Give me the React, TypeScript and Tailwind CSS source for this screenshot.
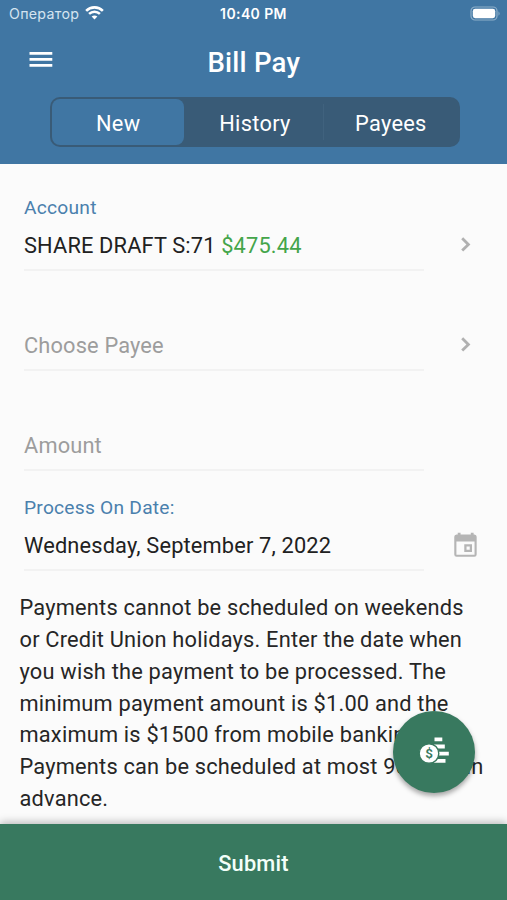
import type { ReactNode } from 'react';

const Chevron = () => (
  <svg viewBox="0 0 32 32" className="h-8 w-8 fill-[#b1b1b1]">
    <path d="M11.2 10.2l2-2 7.2 7.2-7.2 7.2-2-2 5.2-5.2z" />
  </svg>
);

const Calendar = () => (
  <svg viewBox="0 0 24 24" className="h-8 w-8 fill-[#b5b5b5]">
    <path fillRule="evenodd" d="M17.7 4.1V2.9h-2.1v1.2H7.9V2.9H5.8v1.2H4.9A1.8 1.8 0 0 0 3.2 5.9v13.2a1.8 1.8 0 0 0 1.7 1.8h13.4a1.8 1.8 0 0 0 1.7-1.8V5.9a1.8 1.8 0 0 0-1.7-1.8zM18.4 19.3H4.8V9.4h13.6z" />
    <path fillRule="evenodd" d="M10.7 11.4h5.8v5.8h-5.8zm1.7 1.7v2.4h2.4v-2.4z" />
  </svg>
);

function Field({ label, children, icon }: { label?: string; children: ReactNode; icon?: ReactNode }) {
  return (
    <div className="flex h-[100.2px] items-end">
      <div className="ml-6 w-[400px] border-b-2 border-[#f2f2f2]">
        {label && <div className="mb-[8px] whitespace-nowrap text-[19.2px] leading-7 tracking-[0.24px] text-[#4a80ad]">{label}</div>}
        <div className="mb-[7px] whitespace-nowrap text-[21.8px] leading-8 tracking-[0.16px] text-[#212121]">{children}</div>
      </div>
      <div className="mb-[10px] ml-[25.5px] h-8 w-8">{icon}</div>
    </div>
  );
}

export default function App() {
  return (
    <div className="relative flex h-[900px] w-[507px] flex-col overflow-hidden bg-[#fbfbfb] font-['Roboto','Noto_Sans',sans-serif]">
      <header className="h-[164.4px] shrink-0 bg-[#4076a3] text-white">
        <div className="grid h-7 grid-cols-3 items-center pl-[9px] pr-[6px] font-['Inter','Noto_Sans',sans-serif] text-[14px]">
          <div className="flex items-center gap-[6px]">
            <span className="text-[14.2px] tracking-[0.3px] text-[#d5e4f0]">Оператор</span>
            <svg viewBox="0 0 20 14" className="mb-[2px] h-[14px] w-[19px]" fill="none" stroke="white" strokeWidth="2.7">
              <path d="M1.2 4.7C6-.1 14-.1 18.8 4.7M4.3 8C7.5 4.9 12.5 4.9 15.7 8" />
              <path d="M7 10.8C8.7 9.3 11.3 9.3 13 10.8L10 13.8Z" fill="white" stroke="none" />
            </svg>
          </div>
          <div className="-ml-[3px] pb-[2px] text-center text-[14px] font-semibold tracking-[0.4px]">10:40 PM</div>
          <div className="flex justify-end">
            <svg viewBox="0 0 31 15" className="mb-[2px] h-[15px] w-[31px]">
              <rect x="1" y="1" width="26" height="13" rx="4" fill="none" stroke="#8eafca" strokeWidth="1.2" />
              <rect x="2.8" y="2.8" width="22.4" height="9.4" rx="2.4" fill="white" />
              <path d="M28.5 5.2q2.2 2.3 0 4.6z" fill="#8eafca" />
            </svg>
          </div>
        </div>
        <div className="flex h-[69px] items-center">
          <svg viewBox="0 0 24 18" className="mb-[6px] ml-[28.5px] h-[18px] w-6 fill-white">
            <path d="M.5 1h22.8v2.7H.5zM.5 7h22.8v2.7H.5zM.5 13h22.8v2.7H.5z" />
          </svg>
          <h1 className="ml-[155px] whitespace-nowrap text-[27.6px] font-medium tracking-[0.2px]">Bill Pay</h1>
        </div>
        <nav className="ml-[50px] grid h-[50px] w-[410px] grid-cols-3 items-center rounded-[10px] bg-[#395b77] p-[2px] text-center text-[21.8px] tracking-[0.3px]">
          <div className="mr-[3px] flex h-full items-center justify-center rounded-lg bg-[#4076a3] pt-[4px]">New</div>
          <div className="pt-[4px]">History</div>
          <div className="border-l border-[#40627e] pt-[4px]">Payees</div>
        </nav>
      </header>

      <main className="flex-1">
        <div className="pt-[6px]">
          <Field label="Account" icon={<Chevron />}>
            SHARE DRAFT S:71 <span className="text-[#44a54a]">$475.44</span>
          </Field>
          <Field icon={<Chevron />}><span className="text-[#9d9d9d]">Choose Payee</span></Field>
          <Field><span className="text-[#9d9d9d]">Amount</span></Field>
          <Field label="Process On Date:" icon={<Calendar />}>Wednesday, September 7, 2022</Field>
        </div>
        <p className="ml-[19.5px] mt-[21px] whitespace-nowrap text-[21.8px] leading-[31.8px] tracking-[0.2px] text-[#262626]">
          Payments cannot be scheduled on weekends<br />
          or Credit Union holidays. Enter the date when<br />
          you wish the payment to be processed. The<br />
          minimum payment amount is $1.00 and the<br />
          maximum is $1500 from mobile banking.<br />
          Payments can be scheduled at most 90 days in<br />
          advance.
        </p>
      </main>

      <button className="relative flex h-[76px] shrink-0 items-center justify-center bg-[#38795f] pt-[4px] text-[21.8px] font-medium tracking-[0.2px] text-[#f3fff9] shadow-[0_-2px_8px_rgba(0,0,0,0.26)]">
        Submit
      </button>

      <button className="absolute left-[393px] top-[711px] h-[82px] w-[82px] rounded-full bg-[#38795f] shadow-[0_3px_5px_rgba(0,0,0,0.35)]">
        <svg viewBox="0 0 82 82" className="h-full w-full">
          <path fill="white" d="M41.5 26.4h7.8v3.8h-7.8zM41 33.6h10.8v3.9H41zM44 40.7h11.8v3.9H44zM41 47.9h11.5v3.8H41z" />
          <circle cx="36" cy="42.5" r="9.8" fill="white" stroke="#38795f" strokeWidth="1.4" />
          <text x="36" y="47.2" textAnchor="middle" fontSize="13.5" fontWeight="600" fill="#38795f">$</text>
        </svg>
      </button>
    </div>
  );
}
